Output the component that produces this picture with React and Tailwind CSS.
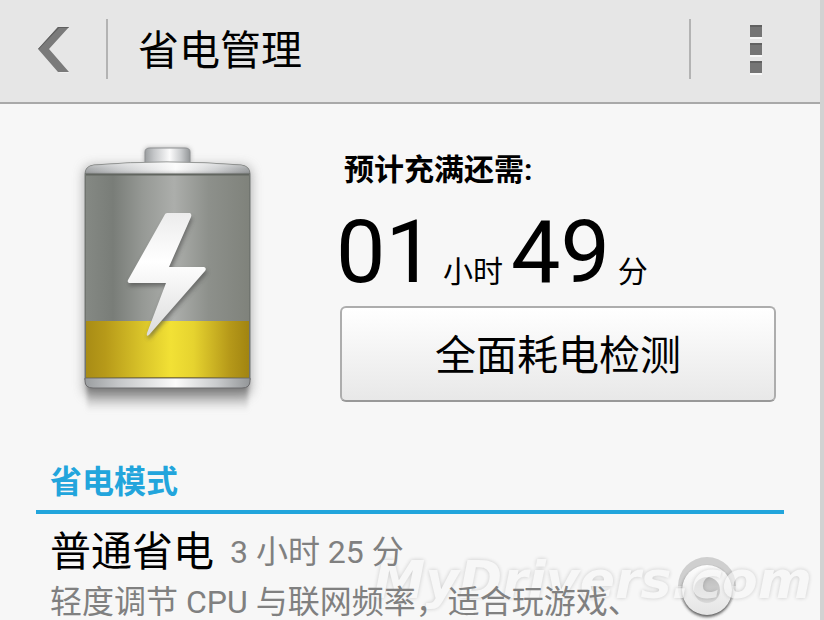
import React, { useState } from "react";

const BackIcon = () => (
  <svg className="h-12 w-8" viewBox="0 0 32 48" aria-hidden="true">
    <path d="M21 47.500H32L30 45.500Z" fill="#fafafa" />
    <path d="M1 24 21 2H32L12 24 32 47H21Z" fill="#7a7a7a" />
    <path d="M1 24 21 2H32L31 3H22L2 24Z" fill="#5f5f5f" />
  </svg>
);

const Battery = () => (
  <svg className="h-[300px] w-[220px] shrink-0" viewBox="60 130 220 300" aria-hidden="true">
    <defs>
      <linearGradient id="shell">
        <stop offset="0" stopColor="#858984" />
        <stop offset="0.17" stopColor="#797d78" />
        <stop offset="0.35" stopColor="#969995" />
        <stop offset="0.54" stopColor="#acaeab" />
        <stop offset="0.75" stopColor="#8d908b" />
        <stop offset="1" stopColor="#7f827b" />
      </linearGradient>
      <linearGradient id="charge">
        <stop offset="0" stopColor="#a88c15" />
        <stop offset="0.12" stopColor="#b79a19" />
        <stop offset="0.35" stopColor="#dac52a" />
        <stop offset="0.52" stopColor="#f2e135" />
        <stop offset="0.66" stopColor="#e6d32f" />
        <stop offset="0.88" stopColor="#b69919" />
        <stop offset="1" stopColor="#a18411" />
      </linearGradient>
      <linearGradient id="metal">
        <stop offset="0" stopColor="#9b9ea0" />
        <stop offset="0.2" stopColor="#c4c6c8" />
        <stop offset="0.55" stopColor="#fbfbfb" />
        <stop offset="0.8" stopColor="#c9cbcd" />
        <stop offset="1" stopColor="#939698" />
      </linearGradient>
      <linearGradient id="lid" x2="0" y2="1">
        <stop offset="0" stopColor="#fff" stopOpacity="0.5" />
        <stop offset="0.6" stopColor="#fff" stopOpacity="0.1" />
        <stop offset="1" stopColor="#555" stopOpacity="0.3" />
      </linearGradient>
      <linearGradient id="floor" x2="0" y2="1">
        <stop offset="0" stopColor="#555" stopOpacity="0.9" />
        <stop offset="0.35" stopColor="#777" stopOpacity="0.6" />
        <stop offset="1" stopColor="#aaa" stopOpacity="0" />
      </linearGradient>
      <linearGradient id="bolt" x2="0" y2="1">
        <stop offset="0" stopColor="#ececec" />
        <stop offset="0.4" stopColor="#fff" />
        <stop offset="1" stopColor="#dcdcdc" />
      </linearGradient>
      <filter id="soft" x="-20%" y="-20%" width="140%" height="140%">
        <feGaussianBlur stdDeviation="6" />
      </filter>
      <filter id="tight" x="-20%" y="-20%" width="140%" height="140%">
        <feGaussianBlur stdDeviation="2" />
      </filter>
    </defs>
    <rect x="84" y="166" width="167" height="230" rx="8" fill="#777" opacity="0.6" filter="url(#soft)" />
    <rect x="87" y="382" width="161" height="30" fill="url(#floor)" filter="url(#tight)" />
    <rect x="144" y="147" width="47" height="20" rx="5" fill="#888" opacity="0.5" filter="url(#tight)" />
    <path d="M145 166V152Q145 148 150 148H185Q190 148 190 152V166Z" fill="url(#metal)" stroke="#8e9092" />
    <path d="M85 174Q85 166 94 165Q130 162 167 162T241 165Q250 166 250 174V380H85Z" fill="url(#metal)" stroke="#777a78" />
    <path d="M85 174Q85 166 94 165Q130 162 167 162T241 165Q250 166 250 174Z" fill="url(#lid)" />
    <rect x="85" y="174" width="165" height="206" fill="url(#shell)" />
    <path d="M85 174.5H250" stroke="#626660" strokeWidth="2" />
    <path d="M85.500 174V380M249.500 174V380" stroke="#70746f" />
    <rect x="86" y="321" width="163" height="57" fill="url(#charge)" />
    <path d="M85 378H250V381Q250 388 242 388H93Q85 388 85 381Z" fill="url(#metal)" stroke="#6c6c6e" />
    <path d="M86 377.500H249" stroke="#8b7b30" />
    <path
      d="M167 215H190Q192 215 191 218L170 268H205Q207 269 205 272L149 336Q146 338 147 334L166 284H129Q127 283 128 281L164 218Q165 215 167 215Z"
      fill="#444" opacity="0.6" filter="url(#tight)" transform="translate(1 2)"
    />
    <path
      d="M167 213H190Q192 214 191 217L169 267H204Q207 268 205 271L149 335Q146 337 147 333L166 283H129Q127 282 128 280L164 216Q165 213 167 213Z"
      fill="url(#bolt)"
    />
  </svg>
);

// Round knob drawn under the (transparent) radio input
const Knob = () => (
  <svg className="h-16 w-16" viewBox="0 0 64 64" aria-hidden="true">
    <defs>
      <linearGradient id="knob" x2="0" y2="1">
        <stop offset="0" stopColor="#fdfdfd" />
        <stop offset="1" stopColor="#e4e4e4" />
      </linearGradient>
      <linearGradient id="dish" x2="0" y2="1">
        <stop offset="0" stopColor="#bebebe" />
        <stop offset="1" stopColor="#dadada" />
      </linearGradient>
      <filter id="drop" x="-20%" y="-20%" width="140%" height="140%">
        <feGaussianBlur stdDeviation="1.500" />
      </filter>
    </defs>
    <circle cx="32" cy="30" r="29" fill="#cfcfcf" />
    <path d="M3 30A29 29 0 0 0 61 30Z" fill="#f7f7f7" opacity="0.7" />
    <circle cx="32" cy="36" r="25" fill="#333" opacity="0.8" filter="url(#drop)" />
    <circle cx="32" cy="34" r="25" fill="url(#knob)" />
    <circle cx="32" cy="34" r="13" fill="url(#dish)" />
  </svg>
);

const App = () => {
  const [mode, setMode] = useState("");

  return (
    <div className="min-h-screen overflow-hidden border-r-4 border-[#d2d2d2] bg-[#f7f7f7] font-[Roboto,'Noto_Sans_CJK_SC',sans-serif] text-black">
      {/* Title bar */}
      <header className="flex h-[104px] items-center border-b-2 border-[#a9a9a9] bg-[#e6e6e6] pb-1">
        <button type="button" aria-label="返回" className="flex w-[106px] justify-center">
          <BackIcon />
        </button>
        <div className="h-[60px] w-0.5 bg-[#b3b3b3]"></div>
        <h1 className="ml-[30px] flex-1 pt-1 text-[41px] leading-[60px]">省电管理</h1>
        <div className="h-[60px] w-0.5 bg-[#b3b3b3]"></div>
        <button type="button" aria-label="更多" className="flex w-[129px] flex-col items-center gap-1.5">
          {[0, 1, 2].map((dot) => (
            <span key={dot} className="h-3 w-3 border-t-2 border-[#616161] bg-[#757575] shadow-[0_2px_0_#f8f8f8]"></span>
          ))}
        </button>
      </header>

      <main>
        {/* Battery and remaining time */}
        <section className="flex gap-[60px] pt-[26px] pr-11 pl-[60px]">
          <Battery />
          <div className="flex-1 pt-5">
            <h2 className="pl-1 text-[30px] leading-10 font-bold">预计充满还需:</h2>
            <p className="-ml-1 mt-3 mb-1 flex items-baseline gap-2 text-[30px] leading-10">
              <span className="text-[88px] leading-[100px]">01</span>
              <span>小时</span>
              <span className="text-[88px] leading-[100px]">49</span>
              <span>分</span>
            </p>
            <button
              type="button"
              className="h-24 w-full rounded-md border-2 border-[#adadad] border-b-[#999] bg-linear-to-b from-white to-[#e8e8e8] pt-1 text-[41px] leading-[60px]"
            >
              全面耗电检测
            </button>
          </div>
        </section>

        {/* Power modes */}
        <section className="pr-9 pl-9">
          <h2 className="border-b-4 border-[#22a5dc] pt-8 pb-2 pl-3.5 text-[32px] leading-10 font-bold text-[#22a5dc]">
            省电模式
          </h2>
          <div className="relative pt-2 pl-3.5">
            <span className="absolute top-[42px] right-[45px]">
              <Knob />
              <input
                id="normal-mode"
                type="radio"
                name="mode"
                checked={mode === "normal"}
                onChange={() => setMode("normal")}
                className="absolute inset-0 appearance-none rounded-full"
              />
            </span>
            <span
              aria-hidden="true"
              className="pointer-events-none absolute top-9 -right-7 font-['DejaVu_Sans',sans-serif] text-[52px] leading-[60px] font-bold text-[#f7f7f7] italic opacity-60 [text-shadow:0_0_4px_#00000050]"
            >
              MyDrivers.com
            </span>
            <label htmlFor="normal-mode" className="relative block">
              <span className="flex items-center gap-4">
                <span className="text-[41px] leading-[60px]">普通省电</span>
                <span className="text-[32px] leading-[60px] text-[#808080]">3 小时 25 分</span>
              </span>
              <span className="block text-[32px] leading-10 whitespace-nowrap text-[#808080]">
                轻度调节 CPU 与联网频率，适合玩游戏、
              </span>
            </label>
          </div>
        </section>
      </main>
    </div>
  );
};

export default App;
